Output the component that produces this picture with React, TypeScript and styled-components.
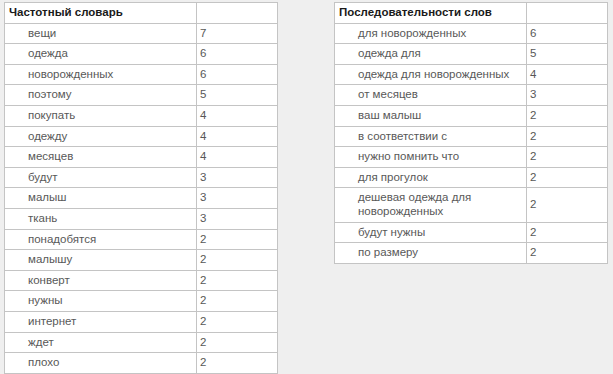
import styled, { createGlobalStyle } from "styled-components";

type Row = [string, number];

const frequency: Row[] = [
  ["вещи", 7],
  ["одежда", 6],
  ["новорожденных", 6],
  ["поэтому", 5],
  ["покупать", 4],
  ["одежду", 4],
  ["месяцев", 4],
  ["будут", 3],
  ["малыш", 3],
  ["ткань", 3],
  ["понадобятся", 2],
  ["малышу", 2],
  ["конверт", 2],
  ["нужны", 2],
  ["интернет", 2],
  ["ждет", 2],
  ["плохо", 2],
];

const sequences: Row[] = [
  ["для новорожденных", 6],
  ["одежда для", 5],
  ["одежда для новорожденных", 4],
  ["от месяцев", 3],
  ["ваш малыш", 2],
  ["в соответствии с", 2],
  ["нужно помнить что", 2],
  ["для прогулок", 2],
  ["дешевая одежда для новорожденных", 2],
  ["будут нужны", 2],
  ["по размеру", 2],
];

function WordTable({ title, rows }: { title: string; rows: Row[] }) {
  return (
    <Table>
      <colgroup>
        <col style={{ width: 192 }} />
        <col />
      </colgroup>
      <thead>
        <tr>
          <HeadCell>{title}</HeadCell>
          <HeadCell />
        </tr>
      </thead>
      <tbody>
        {rows.map(([word, count]) => (
          <tr key={word}>
            <WordCell>{word}</WordCell>
            <CountCell>{count}</CountCell>
          </tr>
        ))}
      </tbody>
    </Table>
  );
}

export default function App() {
  return (
    <>
      <GlobalStyle />
      <Page>
        <WordTable title="Частотный словарь" rows={frequency} />
        <WordTable title="Последовательности слов" rows={sequences} />
      </Page>
    </>
  );
}

const GlobalStyle = createGlobalStyle`
  html, body {
    margin: 0;
    background: #efefef;
  }
  body {
    font-family: "Liberation Sans", Arial, sans-serif;
  }
`;

const Page = styled.div`
  display: flex;
  align-items: flex-start;
  gap: 56px;
  width: 613px;
  height: 374px;
  box-sizing: border-box;
  padding: 2px 0 0 4px;
  overflow: hidden;
`;

const Table = styled.table`
  width: 274px;
  table-layout: fixed;
  border-collapse: collapse;
  background: #ffffff;
  border: 1px solid #c4c4c4;
  font-size: 11.5px;
  line-height: 13.6px;
`;

const Cell = styled.td`
  border: 1px solid #c4c4c4;
  padding: 3px 4px;
  vertical-align: middle;
  text-align: left;
`;

const HeadCell = styled(Cell).attrs({ as: "th" })`
  font-weight: bold;
  color: #1a1a1a;
`;

const WordCell = styled(Cell)`
  padding-left: 23px;
  color: #585858;
`;

const CountCell = styled(Cell)`
  padding-left: 3px;
  color: #585858;
`;
